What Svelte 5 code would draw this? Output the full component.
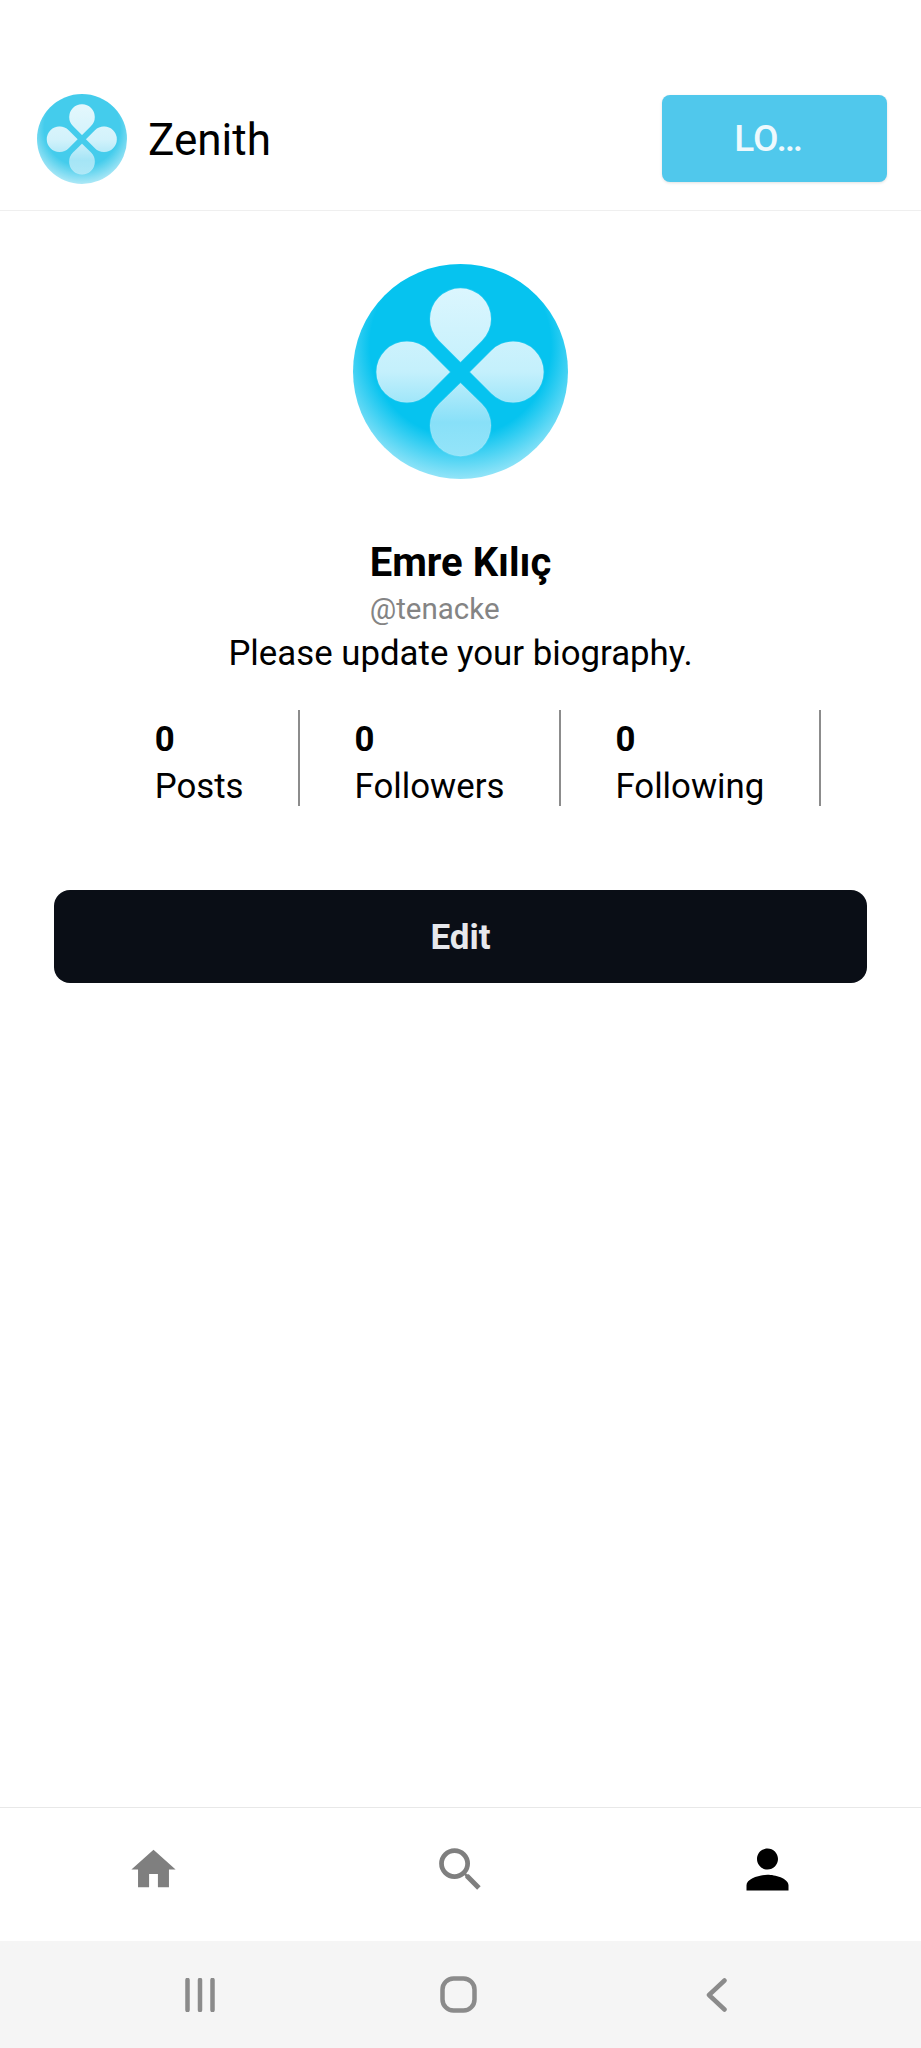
<script>
  const stats = [
    { value: 0, label: 'Posts' },
    { value: 0, label: 'Followers' },
    { value: 0, label: 'Following' }
  ];
</script>

{#snippet logo(size)}
  <svg width={size} height={size} viewBox="0 0 215 215">
    <defs>
      <radialGradient id="disc-{size}" cx="0.5" cy="0.38" r="0.68">
        <stop offset="0.62" stop-color="#06c3ef" />
        <stop offset="1" stop-color="#bdeefb" />
      </radialGradient>
      <linearGradient id="petals-{size}" gradientUnits="userSpaceOnUse" x1="0" y1="24" x2="0" y2="192">
        <stop offset="0" stop-color="#dbf6fe" />
        <stop offset="0.5" stop-color="#c4f0fc" />
        <stop offset="0.8" stop-color="#88e0f8" />
        <stop offset="1" stop-color="#94e4f9" />
      </linearGradient>
    </defs>
    <circle cx="107.5" cy="107.5" r="107.5" fill="url(#disc-{size})" />
    <g fill="url(#petals-{size})" stroke="#fff" stroke-opacity="0.12" stroke-width="1.5">
      <path d="M107.5 98 L86 76.5 A30.5 30.5 0 1 1 129 76.5 Z" />
      <path d="M107.5 119 L86 140 A30.5 30.5 0 1 0 129 140 Z" />
      <path d="M97 108 L75.500 86.500 A30.500 30.500 0 1 0 75.500 129.500 Z" />
      <path d="M117 108 L138.500 86.500 A30.500 30.500 0 1 1 138.500 129.500 Z" />
    </g>
  </svg>
{/snippet}

<div class="page">
  <header class="topbar">
    <div class="brand">
      <div class="brand-logo">{@render logo(90)}</div>
      <span class="brand-name">Zenith</span>
    </div>
    <button class="logout">LO…</button>
  </header>

  <main class="profile">
    <div class="avatar">{@render logo(215)}</div>
    <div class="names">
      <div class="name">Emre Kılıç</div>
      <div class="handle">@tenacke</div>
    </div>
    <p class="bio">Please update your biography.</p>
    <div class="stats">
      {#each stats as stat}
        <div class="stat">
          <div class="stat-value">{stat.value}</div>
          <div class="stat-label">{stat.label}</div>
        </div>
      {/each}
    </div>
    <button class="edit">Edit</button>
  </main>

  <nav class="tabs">
    <div class="tab">
      <svg class="home" viewBox="0 0 24 24"><path d="M10 20v-6h4v6h5v-8h3L12 3 2 12h3v8z" /></svg>
    </div>
    <div class="tab">
      <svg class="search" viewBox="0 0 24 24"><path d="M15.5 14h-.79l-.28-.27A6.47 6.47 0 0 0 16 9.5 6.5 6.5 0 1 0 9.5 16c1.61 0 3.09-.59 4.23-1.57l.27.28v.79l5 4.99L20.49 19l-4.99-5zm-6 0C7.01 14 5 11.99 5 9.5S7.01 5 9.5 5 14 7.01 14 9.5 11.99 14 9.5 14z" /></svg>
    </div>
    <div class="tab">
      <svg class="person" viewBox="0 0 24 24"><path d="M12 12c2.21 0 4-1.79 4-4s-1.79-4-4-4-4 1.79-4 4 1.79 4 4 4zm0 2c-2.67 0-8 1.34-8 4v2h16v-2c0-2.67-5.33-4-8-4z" /></svg>
    </div>
  </nav>

  <div class="system-nav">
    <svg width="30" height="34" viewBox="0 0 30 34"><path d="M2.500 2v30M15 2v30M27.500 2v30" /></svg>
    <svg width="37" height="37" viewBox="0 0 37 37"><rect x="2.500" y="2.500" width="32" height="32" rx="11" /></svg>
    <svg class="back" width="21" height="34" viewBox="0 0 21 34"><path d="M18.500 2.500 3 17l15.500 14.500" /></svg>
  </div>
</div>

<style>
  :global(body) {
    background: #fff;
  }

  .page {
    height: 2048px;
    display: flex;
    flex-direction: column;
    font-family: Roboto, sans-serif;
    color: #000;
    background: #fff;
  }

  /* ─── Header ─── */
  .topbar {
    margin-top: 94px;
    height: 116px;
    padding: 0 34px 0 37px;
    display: flex;
    justify-content: space-between;
    border-bottom: 1px solid #efefef;
  }

  .brand {
    display: flex;
    align-items: center;
    gap: 21px;
    height: 90px;
  }

  .brand-logo {
    height: 90px;
    filter: saturate(0.9) opacity(0.8);
  }

  .brand-name {
    font-size: 44px;
    padding-top: 2px;
  }

  .logout {
    width: 225px;
    height: 87px;
    margin-top: 1px;
    padding: 0 12px 0 0;
    border: 0;
    border-radius: 8px;
    background: #50c8ec;
    color: #eef9fd;
    font-family: inherit;
    font-size: 37px;
    font-weight: 500;
    box-shadow: 0 1px 3px rgba(0, 0, 0, 0.12);
  }

  /* ─── Profile ─── */
  .profile {
    flex: 1;
    display: flex;
    flex-direction: column;
    align-items: center;
    padding-top: 53px;
  }

  .avatar {
    height: 215px;
  }

  .names {
    margin-top: 57px;
  }

  .name {
    font-size: 40px;
    font-weight: 700;
    line-height: 53px;
  }

  .handle {
    font-size: 29.500px;
    line-height: 40px;
    color: #848484;
  }

  .bio {
    margin: 1px 0 0;
    font-size: 34.800px;
    line-height: 46px;
  }

  .stats {
    margin-top: 34px;
    display: flex;
  }

  .stat {
    height: 92px;
    padding: 4px 54.500px 0;
    border-right: 2px solid #8c8c8c;
  }

  .stat-value {
    font-size: 34.800px;
    font-weight: 700;
    line-height: 50px;
  }

  .stat-label {
    font-size: 34.800px;
    line-height: 45px;
  }

  .edit {
    width: 813px;
    height: 93px;
    margin-top: 84px;
    padding: 2px 0 0;
    border: 0;
    border-radius: 16px;
    background: #0a0e16;
    color: #e6e8ec;
    font-family: inherit;
    font-size: 35px;
    font-weight: 700;
  }

  /* ─── Bottom tabs ─── */
  .tabs {
    height: 133px;
    border-top: 1px solid #e8e8e8;
    display: flex;
  }

  .tab {
    flex: 1;
    display: flex;
    align-items: center;
    justify-content: center;
    height: 122px;
  }

  .tab svg {
    fill: #7f7f7f;
  }

  .home {
    width: 53px;
    height: 53px;
  }

  .search {
    width: 57px;
    height: 57px;
  }

  .tab svg.person {
    width: 63px;
    height: 63px;
    fill: #000;
  }

  /* ─── System nav ─── */
  .system-nav {
    height: 107px;
    background: #f5f5f5;
    display: flex;
    align-items: center;
    gap: 225px;
    padding-left: 185px;
  }

  .system-nav svg {
    fill: none;
    stroke: #8b8b8b;
    stroke-width: 4.5;
    stroke-linecap: round;
    stroke-linejoin: round;
  }

  .system-nav .back {
    margin-left: 4px;
  }
</style>
